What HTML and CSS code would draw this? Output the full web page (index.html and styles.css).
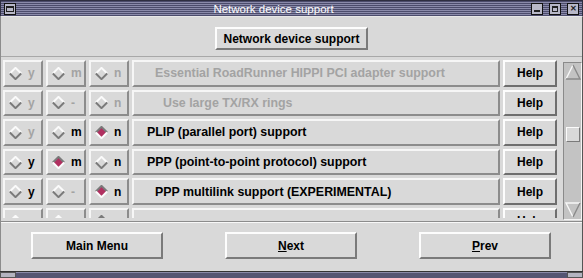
FILE: index.html
```html
<!DOCTYPE html>
<html lang="en">
<head>
    <meta charset="UTF-8">
    <title>Network device support</title>
    <link rel="stylesheet" href="styles.css">
</head>
<body>
    <div class="window">
        <!-- Window manager title bar -->
        <div class="titlebar">
            <span class="wm-btn wm-menu"><i></i></span>
            <span class="title">Network device support</span>
            <span class="wm-btn wm-min"><i></i></span>
            <span class="wm-btn wm-max"><i></i></span>
            <span class="wm-btn wm-close">&#x2715;</span>
        </div>

        <div class="content">
            <div class="header">
                <button class="btn heading">Network device support</button>
            </div>

            <!-- Option list -->
            <div class="list">
                <div class="rows">
                    <div class="row">
                        <div class="cell off"><svg class="dia" viewBox="0 0 12 12"><polygon points="6,1 11,6 6,11 1,6"/><path class="hi" d="M0.8 6 L6 0.8 L11.2 6"/><path class="lo" d="M0.8 6 L6 11.2 L11.2 6"/></svg><span>y</span></div>
                        <div class="cell off"><svg class="dia" viewBox="0 0 12 12"><polygon points="6,1 11,6 6,11 1,6"/><path class="hi" d="M0.8 6 L6 0.8 L11.2 6"/><path class="lo" d="M0.8 6 L6 11.2 L11.2 6"/></svg><span>m</span></div>
                        <div class="cell off"><svg class="dia" viewBox="0 0 12 12"><polygon points="6,1 11,6 6,11 1,6"/><path class="hi" d="M0.8 6 L6 0.8 L11.2 6"/><path class="lo" d="M0.8 6 L6 11.2 L11.2 6"/></svg><span>n</span></div>
                        <div class="label off lvl2">Essential RoadRunner HIPPI PCI adapter support</div>
                        <button class="btn help">Help</button>
                    </div>
                    <div class="row">
                        <div class="cell off"><svg class="dia" viewBox="0 0 12 12"><polygon points="6,1 11,6 6,11 1,6"/><path class="hi" d="M0.8 6 L6 0.8 L11.2 6"/><path class="lo" d="M0.8 6 L6 11.2 L11.2 6"/></svg><span>y</span></div>
                        <div class="cell off"><svg class="dia" viewBox="0 0 12 12"><polygon points="6,1 11,6 6,11 1,6"/><path class="hi" d="M0.8 6 L6 0.8 L11.2 6"/><path class="lo" d="M0.8 6 L6 11.2 L11.2 6"/></svg><span>-</span></div>
                        <div class="cell off"><svg class="dia" viewBox="0 0 12 12"><polygon points="6,1 11,6 6,11 1,6"/><path class="hi" d="M0.8 6 L6 0.8 L11.2 6"/><path class="lo" d="M0.8 6 L6 11.2 L11.2 6"/></svg><span>n</span></div>
                        <div class="label off lvl3">Use large TX/RX rings</div>
                        <button class="btn help">Help</button>
                    </div>
                    <div class="row">
                        <div class="cell off"><svg class="dia" viewBox="0 0 12 12"><polygon points="6,1 11,6 6,11 1,6"/><path class="hi" d="M0.8 6 L6 0.8 L11.2 6"/><path class="lo" d="M0.8 6 L6 11.2 L11.2 6"/></svg><span>y</span></div>
                        <div class="cell"><svg class="dia" viewBox="0 0 12 12"><polygon points="6,1 11,6 6,11 1,6"/><path class="hi" d="M0.8 6 L6 0.8 L11.2 6"/><path class="lo" d="M0.8 6 L6 11.2 L11.2 6"/></svg><span>m</span></div>
                        <div class="cell"><svg class="dia on" viewBox="0 0 12 12"><polygon points="6,1 11,6 6,11 1,6"/><path class="hi" d="M0.8 6 L6 0.8 L11.2 6"/><path class="lo" d="M0.8 6 L6 11.2 L11.2 6"/></svg><span>n</span></div>
                        <div class="label lvl1">PLIP (parallel port) support</div>
                        <button class="btn help">Help</button>
                    </div>
                    <div class="row">
                        <div class="cell"><svg class="dia" viewBox="0 0 12 12"><polygon points="6,1 11,6 6,11 1,6"/><path class="hi" d="M0.8 6 L6 0.8 L11.2 6"/><path class="lo" d="M0.8 6 L6 11.2 L11.2 6"/></svg><span>y</span></div>
                        <div class="cell"><svg class="dia on" viewBox="0 0 12 12"><polygon points="6,1 11,6 6,11 1,6"/><path class="hi" d="M0.8 6 L6 0.8 L11.2 6"/><path class="lo" d="M0.8 6 L6 11.2 L11.2 6"/></svg><span>m</span></div>
                        <div class="cell"><svg class="dia" viewBox="0 0 12 12"><polygon points="6,1 11,6 6,11 1,6"/><path class="hi" d="M0.8 6 L6 0.8 L11.2 6"/><path class="lo" d="M0.8 6 L6 11.2 L11.2 6"/></svg><span>n</span></div>
                        <div class="label lvl1">PPP (point-to-point protocol) support</div>
                        <button class="btn help">Help</button>
                    </div>
                    <div class="row">
                        <div class="cell"><svg class="dia" viewBox="0 0 12 12"><polygon points="6,1 11,6 6,11 1,6"/><path class="hi" d="M0.8 6 L6 0.8 L11.2 6"/><path class="lo" d="M0.8 6 L6 11.2 L11.2 6"/></svg><span>y</span></div>
                        <div class="cell off"><svg class="dia" viewBox="0 0 12 12"><polygon points="6,1 11,6 6,11 1,6"/><path class="hi" d="M0.8 6 L6 0.8 L11.2 6"/><path class="lo" d="M0.8 6 L6 11.2 L11.2 6"/></svg><span>-</span></div>
                        <div class="cell"><svg class="dia on" viewBox="0 0 12 12"><polygon points="6,1 11,6 6,11 1,6"/><path class="hi" d="M0.8 6 L6 0.8 L11.2 6"/><path class="lo" d="M0.8 6 L6 11.2 L11.2 6"/></svg><span>n</span></div>
                        <div class="label lvl2">PPP multilink support (EXPERIMENTAL)</div>
                        <button class="btn help">Help</button>
                    </div>
                    <!-- only the top of the next row shows above the fold -->
                    <div class="row">
                        <div class="cell"><svg class="dia" viewBox="0 0 12 12"><polygon points="6,1 11,6 6,11 1,6"/><path class="hi" d="M0.8 6 L6 0.8 L11.2 6"/><path class="lo" d="M0.8 6 L6 11.2 L11.2 6"/></svg></div>
                        <div class="cell"><svg class="dia" viewBox="0 0 12 12"><polygon points="6,1 11,6 6,11 1,6"/><path class="hi" d="M0.8 6 L6 0.8 L11.2 6"/><path class="lo" d="M0.8 6 L6 11.2 L11.2 6"/></svg></div>
                        <div class="cell"><svg class="dia on" viewBox="0 0 12 12"><polygon points="6,1 11,6 6,11 1,6"/><path class="hi" d="M0.8 6 L6 0.8 L11.2 6"/><path class="lo" d="M0.8 6 L6 11.2 L11.2 6"/></svg></div>
                        <div class="label lvl1"></div>
                        <button class="btn help">Help</button>
                    </div>
                </div>

                <!-- Vertical scrollbar -->
                <div class="scrollbar">
                    <svg class="arrow" viewBox="0 0 16 16"><path class="hi" d="M1 15 L8 1"/><path class="lo" d="M8 1 L15 15 L1 15"/></svg>
                    <div class="track"><div class="thumb"></div></div>
                    <svg class="arrow" viewBox="0 0 16 16"><path class="hi" d="M15 1 L1 1 L8 15"/><path class="lo" d="M8 15 L15 1"/></svg>
                </div>
            </div>

            <!-- Navigation -->
            <div class="footer">
                <button class="btn nav">Main Menu</button>
                <button class="btn nav"><u>N</u>ext</button>
                <button class="btn nav"><u>P</u>rev</button>
            </div>
        </div>

        <div class="frame-bottom"><span class="corner"></span><span class="handle"></span><span class="corner"></span></div>
    </div>
</body>
</html>
```

FILE: styles.css
```css
/* General */
* {
    box-sizing: border-box;
}

body {
    margin: 0;
    background: #d9d9d9;
    font-family: "Liberation Sans", Arial, sans-serif;
    font-size: 12px;
    font-weight: bold;
    color: #000;
}

.window {
    width: 583px;
    height: 278px;
    display: flex;
    flex-direction: column;
    overflow: hidden;
}

/* Title bar */
.titlebar {
    height: 17px;
    display: flex;
    align-items: center;
    padding: 0 3px;
    gap: 4px;
    background: repeating-linear-gradient(to bottom, #4c4c6c 0, #4c4c6c 1px, #8a8aaa 1px, #8a8aaa 2px);
    border: 1px solid #2e2e40;
    border-bottom-color: #e8e8e8;
}

.title {
    flex: 1;
    text-align: center;
    color: #fff;
    font-weight: normal;
    font-size: 11.5px;
    line-height: 14px;
}

.wm-btn {
    width: 12px;
    height: 12px;
    background: #b8b8c8;
    border: 1px solid #111;
    display: flex;
    align-items: center;
    justify-content: center;
    font-size: 8px;
    color: #222;
    line-height: 1;
}

.wm-btn + .wm-btn {
    margin-left: 2px;
}

.wm-menu i {
    width: 8px;
    height: 6px;
    border: 1px solid #222;
    border-top-width: 2px;
}

.wm-min i {
    width: 6px;
    height: 2px;
    margin-top: 5px;
    background: #222;
}

.wm-max i {
    width: 6px;
    height: 6px;
    border: 1px solid #222;
    border-top-width: 2px;
}

/* Content */
.content {
    flex: 1;
    display: flex;
    flex-direction: column;
    border-left: 1px solid #8c8c8c;
    border-right: 1px solid #555;
}

.btn {
    font-family: inherit;
    font-size: 12px;
    font-weight: bold;
    color: #000;
    background: #d9d9d9;
    border: 2px solid;
    border-color: #fdfdfd #7a7a7a #7a7a7a #fdfdfd;
    padding: 0;
    cursor: pointer;
}

.header {
    height: 39px;
    display: flex;
    justify-content: center;
    padding-top: 10px;
}

.heading {
    height: 23px;
    padding: 0 6px;
}

/* Option list */
.list {
    height: 165px;
    display: flex;
    padding: 3px 0 0 2px;
    border-top: 1px solid #a8a8a8;
}

.rows {
    width: 555px;
    height: 158px;
    display: flex;
    flex-direction: column;
    gap: 3px;
    overflow: hidden;
}

.row {
    flex: 0 0 26.6px;
    display: flex;
    gap: 3px;
}

.cell,
.label {
    border: 2px solid;
    border-color: #f6f6f6 #8c8c8c #8c8c8c #f6f6f6;
    display: flex;
    align-items: center;
}

.cell {
    width: 40px;
    padding-left: 4px;
    gap: 6px;
}

.label {
    width: 368px;
    padding-left: 13px;
    font-size: 12.4px;
}

.lvl2 {
    padding-left: 21px;
}

.lvl3 {
    padding-left: 29px;
}

.off {
    color: #a3a3a3;
}

.dia {
    width: 13px;
    height: 13px;
    flex: none;
}

.dia polygon {
    fill: none;
}

.dia path {
    fill: none;
    stroke-width: 1.8;
}

.dia .hi {
    stroke: #fbfbfb;
}

.dia .lo {
    stroke: #7a7a7a;
}

.dia.on polygon {
    fill: #b03060;
}

.dia.on .hi {
    stroke: #7a7a7a;
}

.dia.on .lo {
    stroke: #fbfbfb;
}

.help {
    width: 54px;
    border-color: #fdfdfd #6e6e6e #6e6e6e #fdfdfd;
}

/* Scrollbar */
.scrollbar {
    width: 19px;
    height: 158px;
    margin: 2px 0 0 5px;
    display: flex;
    flex-direction: column;
    align-items: center;
    background: #c3c3c3;
    border: 1px solid;
    border-color: #8a8a8a #f4f4f4 #f4f4f4 #8a8a8a;
    padding: 1px 0;
}

.arrow {
    width: 16px;
    height: 16px;
    flex: none;
}

.arrow path {
    fill: none;
    stroke-width: 1.4;
}

.arrow .hi {
    stroke: #f8f8f8;
}

.arrow .lo {
    stroke: #8a8a8a;
}

.track {
    flex: 1;
    width: 100%;
    padding-top: 47px;
    display: flex;
    justify-content: center;
}

.thumb {
    width: 14px;
    height: 15px;
    background: #d9d9d9;
    border: 1px solid;
    border-color: #fbfbfb #7a7a7a #7a7a7a #fbfbfb;
}

/* Footer */
.footer {
    flex: 1;
    display: flex;
    justify-content: space-between;
    align-items: flex-start;
    padding: 10px 31px 0 30px;
    border-top: 1px solid #8c8c8c;
    box-shadow: inset 0 1px 0 #f8f8f8;
}

.nav {
    width: 132px;
    height: 27px;
}

.frame-bottom {
    height: 7px;
    display: flex;
    border-top: 1px solid #333;
}

.corner {
    width: 16px;
    background: #b4b4c0;
    border: 1px solid #555;
}

.handle {
    flex: 1;
    background: #555572;
    border-top: 1px solid #8a8aa8;
}
```
